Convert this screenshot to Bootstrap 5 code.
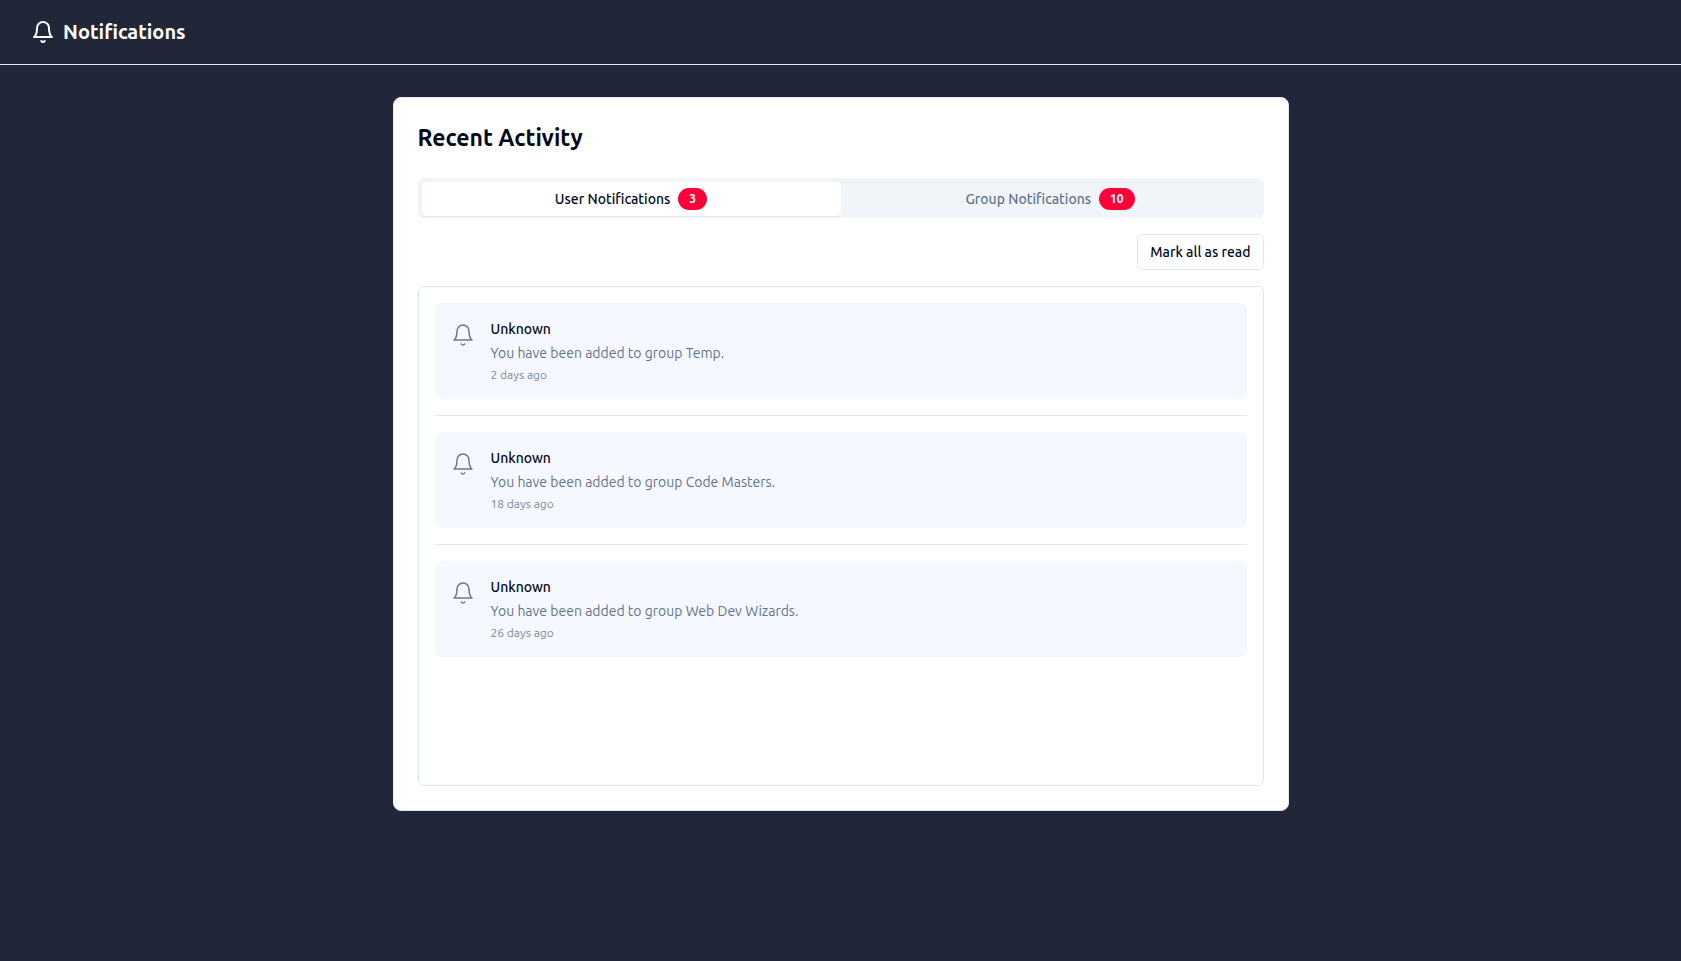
<!DOCTYPE html>
<html lang="en">
<head>
<meta charset="utf-8">
<meta name="viewport" content="width=device-width, initial-scale=1">
<title>Notifications</title>
<link href="https://cdn.jsdelivr.net/npm/bootstrap@5.3.0/dist/css/bootstrap.min.css" rel="stylesheet">
<style>
  :root { --line: #e2e8f0; --ink: #020817; --muted: #64748b; }
  body { background: #212738; color: var(--ink); font-family: Ubuntu, "Noto Sans", sans-serif; font-size: 14px; line-height: 20px; }
  .top-bar { padding: 16px 31px; border-bottom: 1px solid var(--line); }
  .top-title { font-size: 20px; line-height: 32px; font-weight: 600; }
  .bell { width: 24px; height: 24px; fill: none; stroke: currentColor; stroke-width: 2; stroke-linecap: round; stroke-linejoin: round; flex: none; }
  .panel { max-width: 896px; border: 1px solid var(--line); border-radius: 8px; padding: 24px; }
  .panel-title { font-size: 23px; line-height: 32px; font-weight: 600; }
  .tab-strip { background: #f1f5f9; border-radius: 6px; padding: 4px 4px 2px; }
  .tab-strip .nav-link { padding: 6px 12px; line-height: 22px; border: 0; border-radius: 4px; background: transparent; font-weight: 500; color: var(--muted); }
  .tab-strip .nav-link.active { background: #fff; color: var(--ink); box-shadow: 0 1px 2px rgba(0,0,0,.06); }
  .count { background: #ff0038; color: #fff; border-radius: 11px; padding: 0 11px; font-size: 12px; line-height: 22px; font-weight: 600; }
  .btn-read { border: 1px solid var(--line); border-radius: 6px; padding: 7px 12px; font-size: 14px; line-height: 20px; font-weight: 500; color: var(--ink); background: #fff; }
  .feed { border: 1px solid var(--line); border-radius: 6px; min-height: 500px; padding: 16px; }
  .feed-item { background: #f5f8ff; border-radius: 8px; padding: 16px; }
  .feed-item .bell { color: #717486; stroke-width: 1.5; }
  .feed hr { margin: 0; border-top: 1px solid var(--line); opacity: 1; }
  .who { font-weight: 500; }
  .what { color: var(--muted); }
  .when { color: #7b8799; font-size: 12px; line-height: 16px; }
</style>
</head>
<body>
<svg class="d-none" aria-hidden="true">
  <symbol id="bell" viewBox="0 0 24 24">
    <path d="M6 8a6 6 0 0 1 12 0c0 7 3 9 3 9H3s3-2 3-9"/>
    <path d="M10.3 21a1.94 1.94 0 0 0 3.4 0"/>
  </symbol>
</svg>
<header class="top-bar d-flex align-items-center gap-2 text-white">
  <svg class="bell" aria-hidden="true"><use href="#bell"/></svg>
  <h1 class="top-title mb-0">Notifications</h1>
</header>
<main class="px-3 py-4">
  <section class="panel bg-white mx-auto mt-2">
    <h2 class="panel-title mb-4">Recent Activity</h2>
    <div class="tab-strip nav nav-justified flex-nowrap mb-3" role="tablist">
      <button type="button" class="nav-link active d-flex justify-content-center gap-2 flex-fill w-50" role="tab" aria-selected="true">User Notifications<span class="count">3</span></button>
      <button type="button" class="nav-link d-flex justify-content-center gap-2 flex-fill w-50" role="tab" aria-selected="false">Group Notifications<span class="count">10</span></button>
    </div>
    <div class="d-flex justify-content-end mb-3">
      <button type="button" class="btn btn-read">Mark all as read</button>
    </div>
    <div class="feed d-flex flex-column gap-3">
      <article class="feed-item d-flex gap-3">
        <svg class="bell mt-1" aria-hidden="true"><use href="#bell"/></svg>
        <div class="d-flex flex-column gap-1">
          <div class="who">Unknown</div>
          <div class="what">You have been added to group Temp.</div>
          <div class="when">2 days ago</div>
        </div>
      </article>
      <hr>
      <article class="feed-item d-flex gap-3">
        <svg class="bell mt-1" aria-hidden="true"><use href="#bell"/></svg>
        <div class="d-flex flex-column gap-1">
          <div class="who">Unknown</div>
          <div class="what">You have been added to group Code Masters.</div>
          <div class="when">18 days ago</div>
        </div>
      </article>
      <hr>
      <article class="feed-item d-flex gap-3">
        <svg class="bell mt-1" aria-hidden="true"><use href="#bell"/></svg>
        <div class="d-flex flex-column gap-1">
          <div class="who">Unknown</div>
          <div class="what">You have been added to group Web Dev Wizards.</div>
          <div class="when">26 days ago</div>
        </div>
      </article>
    </div>
  </section>
</main>
<script src="https://cdn.jsdelivr.net/npm/bootstrap@5.3.0/dist/js/bootstrap.bundle.min.js"></script>
</body>
</html>
